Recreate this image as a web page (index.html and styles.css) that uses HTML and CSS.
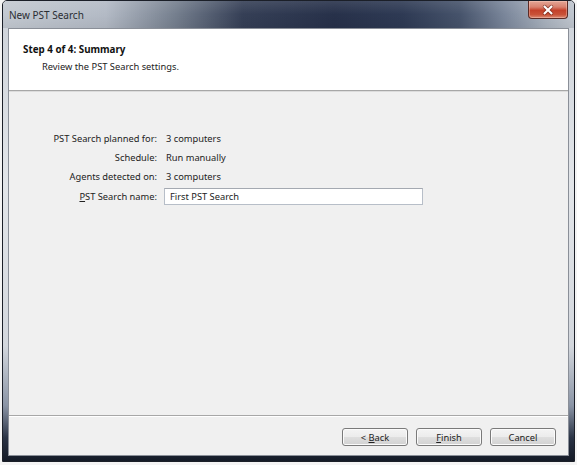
FILE: index.html
```html
<!DOCTYPE html>
<html>
<head>
<meta charset="utf-8">
<title>New PST Search</title>
<link rel="stylesheet" href="styles.css">
</head>
<body>
<div class="window">
  <div class="titlebar">
    <span class="title">New PST Search</span>
    <button class="close" aria-label="Close">
      <svg width="40" height="18" viewBox="0 0 40 18">
        <path d="M16.5 5.5 L23.5 12.5 M23.5 5.5 L16.5 12.5" stroke="#5a1a10" stroke-width="4" stroke-linecap="round" fill="none" opacity="0.55"/>
        <path d="M16.5 5.5 L23.5 12.5 M23.5 5.5 L16.5 12.5" stroke="#ffffff" stroke-width="2.2" stroke-linecap="square" fill="none"/>
      </svg>
    </button>
  </div>
  <div class="client">
    <div class="header">
      <div class="step">Step 4 of 4: Summary</div>
      <div class="desc">Review the PST Search settings.</div>
    </div>
    <div class="content">
      <div class="form">
        <div class="label">PST Search planned for:</div>
        <div class="value">3 computers</div>
        <div class="label">Schedule:</div>
        <div class="value">Run manually</div>
        <div class="label">Agents detected on:</div>
        <div class="value">3 computers</div>
        <div class="label label-input"><u>P</u>ST Search name:</div>
        <div class="input">First PST Search</div>
      </div>
    </div>
    <div class="footer">
      <button class="btn">&lt; <u>B</u>ack</button>
      <button class="btn"><u>F</u>inish</button>
      <button class="btn">Cancel</button>
    </div>
  </div>
</div>
</body>
</html>
```
FILE: styles.css
```css
* { box-sizing: border-box; }
html, body { margin: 0; padding: 0; }
body {
  width: 577px;
  height: 465px;
  background: #f4f4f4;
  font-family: "Noto Sans", "Open Sans", sans-serif;
  overflow: hidden;
}
.window {
  margin-left: 2px;
  width: 573px;
  height: 462px;
  border: 1px solid #1b1f28;
  border-radius: 5px 5px 0 0;
  padding: 0 5px 5px 5px;
  display: flex;
  flex-direction: column;
  background:
    linear-gradient(to bottom, #cdd2d9 0%, #e2e5e9 40%, #d3d7dd 75%, #8a94a5 88%, #2a3345 95%, #141a26 100%);
}
.titlebar {
  height: 27px;
  margin: 0 -5px;
  padding: 0 6px 0 6px;
  display: flex;
  align-items: flex-start;
  justify-content: space-between;
  border-radius: 4px 4px 0 0;
  background:
    linear-gradient(to bottom, rgba(255,255,255,0.10) 0%, rgba(255,255,255,0.0) 50%, rgba(0,0,0,0.05) 100%),
    linear-gradient(to right, #c3c9d1 0%, #b3bac5 18%, #76808f 30%, #353f56 42%, #27314a 58%, #2e3a54 70%, #46536b 80%, #7b879b 88%, #a8b1bd 95%, #c0c6cf 100%);
}
.title {
  font-size: 10px;
  color: #2a2d33;
  line-height: 28px;
}
.close {
  width: 40px;
  height: 18px;
  margin: 0;
  padding: 0;
  border: 1px solid #5b2a25;
  border-top: none;
  border-radius: 0 0 4px 4px;
  background: linear-gradient(to bottom, #e4a696 0%, #d88270 35%, #c4412a 55%, #c95238 80%, #dc8a74 100%);
  box-shadow: inset 0 0 0 1px rgba(255,220,210,0.35);
  display: flex;
}
.close svg { display: block; }
.client {
  flex: 1;
  border: 1px solid #8a8f98;
  display: flex;
  flex-direction: column;
  background: #f0f0f0;
}
.header {
  height: 62px;
  background: #ffffff;
  padding: 13px 0 0 14px;
  border-bottom: 1px solid #a7a7a7;
}
.step {
  font-weight: bold;
  font-size: 9.8px;
  line-height: 16px;
  color: #111;
}
.desc {
  font-size: 9.3px;
  line-height: 17px;
  color: #222;
  padding-left: 19px;
}
.content {
  flex: 1;
  padding-top: 38px;
  border-bottom: 1px solid #a7a7a7;
  box-shadow: inset 0 1px 0 #dcdcdc;
}
.form {
  display: grid;
  grid-template-columns: 148px 259px;
  column-gap: 7px;
  grid-auto-rows: 19px;
  font-size: 9.3px;
  color: #222;
}
.label {
  text-align: right;
  line-height: 19px;
}
.value {
  line-height: 19px;
  padding-left: 2px;
}
.label-input { margin-top: 2px; line-height: 17px; height: 17px; }
.label u, .btn u { text-decoration: underline; text-underline-offset: 1px; }
.input {
  margin-top: 2px;
  height: 17px;
  border: 1px solid #b7bec8;
  border-top-color: #a4a9b1;
  background: #fff;
  line-height: 15px;
  padding-left: 5px;
}
.footer {
  height: 39px;
  padding: 12px 12px 0 0;
  display: flex;
  justify-content: flex-end;
  align-items: flex-start;
  gap: 8px;
  box-shadow: inset 0 1px 0 #ffffff;
}
.btn {
  width: 66px;
  height: 18px;
  margin: 0;
  padding: 0;
  border: 1px solid #7a7a7a;
  border-radius: 3px;
  font-family: "Noto Sans", "Open Sans", sans-serif;
  font-size: 9.3px;
  color: #222;
  background: linear-gradient(to bottom, #f4f4f4 0%, #ececec 48%, #dedede 52%, #d2d2d2 100%);
  box-shadow: inset 0 0 0 1px #fbfbfb;
  line-height: 15px;
}
```
